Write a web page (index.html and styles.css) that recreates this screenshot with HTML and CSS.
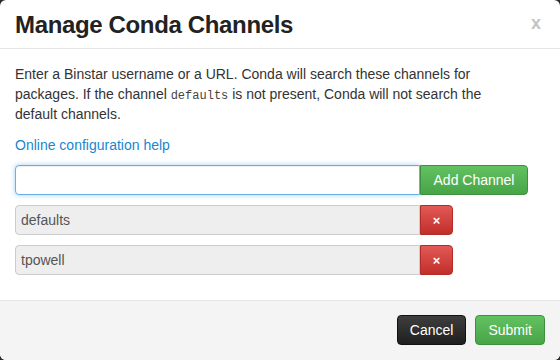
FILE: index.html
```html
<!DOCTYPE html>
<html lang="en">
<head>
    <meta charset="UTF-8">
    <title>Manage Conda Channels</title>
    <link rel="stylesheet" href="styles.css">
</head>
<body>
    <div class="modal">
        <div class="modal-header">
            <h3 class="modal-title">Manage Conda Channels</h3>
            <button class="close" type="button">x</button>
        </div>
        <div class="modal-body">
            <p class="intro">Enter a Binstar username or a URL. Conda will search these channels for packages. If the channel <code>defaults</code> is not present, Conda will not search the default channels.</p>
            <a class="help-link" href="#">Online configuration help</a>

            <div class="input-group">
                <input class="form-control focused" type="text">
                <button class="btn btn-success btn-add" type="button">Add Channel</button>
            </div>
            <div class="input-group">
                <input class="form-control" type="text" value="defaults" disabled>
                <button class="btn btn-danger btn-remove" type="button">&times;</button>
            </div>
            <div class="input-group">
                <input class="form-control" type="text" value="tpowell" disabled>
                <button class="btn btn-danger btn-remove" type="button">&times;</button>
            </div>
        </div>
        <div class="modal-footer">
            <button class="btn btn-dark" type="button">Cancel</button>
            <button class="btn btn-success" type="button">Submit</button>
        </div>
    </div>
</body>
</html>
```

FILE: styles.css
```css
body {
    margin: 0;
    padding: 0;
    background-color: #2b2b2b;
    font-family: "Liberation Sans", Arial, sans-serif;
    font-size: 14px;
    line-height: 20px;
    color: #333;
}

.modal {
    width: 560px;
    height: 360px;
    background-color: #fff;
    border-radius: 6px;
    overflow: hidden;
    display: flex;
    flex-direction: column;
}

.modal-header {
    display: flex;
    justify-content: space-between;
    align-items: flex-start;
    padding: 11px 15px 9px 15px;
    border-bottom: 1px solid #e5e5e5;
}

.modal-title {
    margin: 0;
    font-size: 24px;
    line-height: 28px;
    font-weight: bold;
    letter-spacing: -0.35px;
    color: #222;
}

.close {
    margin: 2px 4px 0 0;
    padding: 0;
    border: 0;
    background: none;
    font-family: "Liberation Sans", Arial, sans-serif;
    font-size: 18px;
    line-height: 20px;
    font-weight: bold;
    color: #c4c4c4;
    cursor: pointer;
}

.modal-body {
    padding: 15px 15px 5px 15px;
    flex: 1;
}

.intro {
    margin: 0 0 11px 0;
    max-width: 470px;
}

.intro code {
    font-family: "Liberation Mono", "Courier New", monospace;
    font-size: 12px;
    line-height: 1;
    color: #444;
}

.help-link {
    display: block;
    color: #1a86cf;
    text-decoration: none;
    margin-bottom: 10px;
}

.input-group {
    display: flex;
    margin-bottom: 10px;
}

.form-control {
    box-sizing: border-box;
    width: 405px;
    height: 30px;
    margin: 0;
    padding: 4px 5px;
    border: 1px solid #ccc;
    border-radius: 4px 0 0 4px;
    font-family: "Liberation Sans", Arial, sans-serif;
    font-size: 14px;
    color: #555;
    background-color: #eee;
}

.form-control.focused {
    background-color: #fff;
    border-color: #66afe9;
    box-shadow: inset 0 1px 1px rgba(0, 0, 0, 0.075), 0 0 5px rgba(102, 175, 233, 0.6);
    outline: 0;
}

.btn {
    box-sizing: border-box;
    height: 30px;
    padding: 0 12px;
    border: 1px solid transparent;
    border-radius: 4px;
    font-family: "Liberation Sans", Arial, sans-serif;
    font-size: 14px;
    color: #fff;
    cursor: pointer;
}

.btn-success {
    background: linear-gradient(#62c262, #47a447);
    border-color: #3e8f3e;
}

.btn-danger {
    background: linear-gradient(#e25a56, #c12e2a);
    border-color: #b52b27;
}

.btn-dark {
    background: linear-gradient(#3e3e3e, #1f1f1f);
    border-color: #111;
}

.btn-add {
    width: 108px;
    border-radius: 0 4px 4px 0;
}

.btn-remove {
    width: 33px;
    padding: 0;
    border-radius: 0 4px 4px 0;
    font-weight: bold;
    font-size: 13px;
}

.modal-footer {
    display: flex;
    justify-content: flex-end;
    gap: 9px;
    padding: 14px 15px 15px 15px;
    border-top: 1px solid #e5e5e5;
    background-color: #f4f4f4;
}
```
